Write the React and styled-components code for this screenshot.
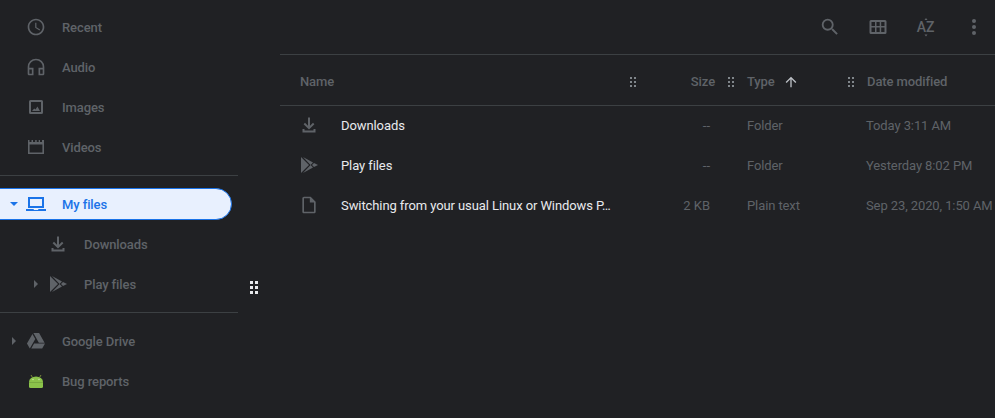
import React from "react";
import styled, { createGlobalStyle } from "styled-components";

const GlobalStyle = createGlobalStyle`
  html, body {
    margin: 0;
    height: 100%;
    background: #202124;
    overflow: hidden;
  }
  #root {
    height: 100%;
  }
`;

const Page = styled.div`
  position: relative;
  display: flex;
  height: 418px;
  font-family: Roboto, "Liberation Sans", sans-serif;
  font-size: 13px;
  letter-spacing: -0.1px;
  color: #5f6368;
  background: #202124;
`;

const Sidebar = styled.nav`
  position: relative;
  flex: 0 0 280px;
  padding-top: 7px;
  box-sizing: border-box;
`;

const Divider = styled.div`
  width: 238px;
  height: 1px;
  margin: 8px 0;
  background: #3c4043;
`;

const Item = styled.div`
  display: flex;
  align-items: center;
  height: 40px;
  padding-left: ${(p) => (p.$nested ? "22px" : "0")};
  font-weight: 500;
  color: #5f6368;
`;

const ActiveItem = styled(Item)`
  position: relative;
  color: #1a73e8;
  z-index: 0;

  &::before {
    content: "";
    position: absolute;
    z-index: -1;
    left: -1px;
    top: 4px;
    width: 233px;
    height: 32px;
    box-sizing: border-box;
    background: #e8f0fe;
    border: 1px solid #1a73e8;
    border-radius: 0 16px 16px 0;
  }
`;

const Expander = styled.span`
  flex: 0 0 26px;
  display: flex;
  justify-content: center;
  padding-left: 2px;
  box-sizing: border-box;
`;

const ItemLabel = styled.span`
  margin-left: 16px;
`;

const Triangle = styled.span`
  width: 0;
  height: 0;
  ${(p) =>
    p.$open
      ? `border-left: 4px solid transparent;
         border-right: 4px solid transparent;
         border-top: 4px solid #1a73e8;`
      : `border-top: 4px solid transparent;
         border-bottom: 4px solid transparent;
         border-left: 4px solid #5f6368;`}
`;

const Svg = styled.svg`
  flex: none;
  display: block;
  color: ${(p) => p.$color || "#5f6368"};
  fill: currentColor;
`;

const SplitterGrip = styled.div`
  position: absolute;
  left: 250px;
  top: 281px;
`;

const Main = styled.main`
  flex: 1;
  min-width: 0;
`;

const Toolbar = styled.header`
  display: flex;
  justify-content: flex-end;
  align-items: center;
  gap: 24px;
  height: 54px;
  padding-right: 9px;
  border-bottom: 1px solid #3c4043;
`;

const ToolIcon = styled.span`
  display: flex;
  width: 24px;
  height: 24px;
  align-items: center;
  justify-content: center;
`;

const TableHead = styled.div`
  display: grid;
  grid-template-columns: 326px 14px 75px 32px 97px 14px 1fr;
  align-items: center;
  height: 50px;
  box-sizing: content-box;
  padding-left: 20px;
  border-bottom: 1px solid #3c4043;
  font-weight: 500;
`;

const HeadCell = styled.div`
  display: flex;
  align-items: center;
  justify-content: ${(p) => (p.$end ? "flex-end" : "flex-start")};
  gap: 8px;
  padding-top: 3px;
  padding-left: ${(p) => p.$inset || "0"};
`;

const GripCell = styled.div`
  display: flex;
  justify-content: center;
  padding-top: 3px;
`;

const Row = styled.div`
  display: grid;
  grid-template-columns: 332px 98px 14px 137px 1fr;
  align-items: center;
  height: 40px;
  padding-bottom: 2px;
  box-sizing: border-box;
  white-space: nowrap;
`;

const NameCell = styled.div`
  display: flex;
  align-items: center;
  gap: 22px;
  padding-left: 19px;
`;

const FileName = styled.span`
  color: #e8eaed;
  letter-spacing: -0.09px;
`;

const SizeCell = styled.div`
  grid-column: 2;
  text-align: right;
  letter-spacing: 0;
`;

const TypeCell = styled.div`
  grid-column: 4;
  padding-left: 23px;
`;

const DateCell = styled.div`
  padding-left: 5px;
`;

const Icon = ({ size = 20, box = 24, color, children }) => (
  <Svg width={size} height={size} viewBox={`0 0 ${box} ${box}`} $color={color}>
    {children}
  </Svg>
);

const ClockIcon = () => (
  <Icon>
    <path d="M11.99 2C6.47 2 2 6.48 2 12s4.47 10 9.99 10C17.52 22 22 17.52 22 12S17.52 2 11.99 2zM12 20c-4.42 0-8-3.58-8-8s3.58-8 8-8 8 3.58 8 8-3.58 8-8 8zm.5-13H11v6l5.25 3.15.75-1.23-4.5-2.67z" />
  </Icon>
);

const HeadsetIcon = () => (
  <Icon>
    <path d="M12 2a10 10 0 0 0-10 10v8c0 1.1.9 2 2 2h5v-9H4v-1c0-4.42 3.58-8 8-8s8 3.58 8 8v1h-5v9h5c1.1 0 2-.9 2-2v-8A10 10 0 0 0 12 2zM7 15v5H4v-5h3zm13 5h-3v-5h3v5z" />
  </Icon>
);

const ImageIcon = () => (
  <Icon box={20}>
    <path d="M4.5 3h11A1.5 1.5 0 0 1 17 4.500v11a1.500 1.500 0 0 1-1.500 1.500h-11A1.500 1.500 0 0 1 3 15.500v-11A1.500 1.500 0 0 1 4.500 3zM5 5v10h10V5H5z" fillRule="evenodd" />
    <path d="M6 14l2.200-2.600 1.300 1 1.900-2.900L14 14z" />
  </Icon>
);

const MovieIcon = () => (
  <Icon box={20}>
    <path
      d="M2 3h1.500v2h2V3h1.500v2h2.200V3h1.500v2h2V3H14v2h2V3h2v14H2V3zm1.600 4.500v8h12.800v-8H3.600z"
      fillRule="evenodd"
    />
  </Icon>
);

const LaptopIcon = () => (
  <Icon box={20} color="#1a73e8">
    <path d="M2 3h16v11H2V3zm2 2v7h12V5H4z" fillRule="evenodd" />
    <path d="M0 15h7.500l.5 1h4l.5-1H20v2H0z" />
  </Icon>
);

const DownloadIcon = () => (
  <Icon box={20}>
    <path d="M9 2.500h2v8.300l3-3 1.400 1.400L10 14.600 4.600 9.200 6 7.800l3 3V2.500zM3.500 14h2v1.500h9V14h2v3.500h-13V14z" />
  </Icon>
);

const PlayIcon = () => (
  <Icon box={20}>
    <path d="M2 2v16l8-8z" />
    <path d="M4 2l10 5.600-2.400 2.400zM4 18l10-5.600-2.400-2.400z" />
    <path d="M15 8l4 2-4 2-2-2z" />
  </Icon>
);

const FileIcon = () => (
  <Icon>
    <path d="M14 2H6c-1.100 0-2 .9-2 2v16c0 1.100.9 2 2 2h12c1.100 0 2-.9 2-2V8l-6-6zM6 20V4h7v5h5v11H6z" />
  </Icon>
);

const DriveIcon = () => (
  <Icon>
    <path d="M7.710 3.500L1.150 15l3.430 6 6.550-11.500L7.710 3.500zM9.730 15L6.300 21h13.120l3.430-6H9.730zM22.280 14l-6.560-11.500H8.870L15.430 14h6.850z" />
  </Icon>
);

const AndroidIcon = () => (
  <Icon box={20}>
    <path d="M6.500 6.500L5 4M13.500 6.500L15 4" stroke="#7a8b3a" strokeWidth="1" fill="none" />
    <path
      d="M3 11a7 5.500 0 0 1 14 0v4.500a1.500 1.500 0 0 1-1.500 1.500h-11A1.500 1.500 0 0 1 3 15.500z"
      fill="#8bc34a"
    />
    <rect x="3" y="11" width="14" height="0.600" fill="#6d9a3a" />
    <circle cx="7" cy="8.500" r="0.800" fill="#c5e1a5" />
    <circle cx="13" cy="8.500" r="0.800" fill="#c5e1a5" />
  </Icon>
);

const SearchIcon = () => (
  <Icon size={22}>
    <path d="M15.500 14h-.79l-.28-.27A6.471 6.471 0 0 0 16 9.500 6.500 6.500 0 1 0 9.500 16c1.610 0 3.090-.59 4.230-1.570l.27.28v.79l5 4.990L20.490 19l-4.990-5zm-6 0C7.010 14 5 11.990 5 9.500S7.010 5 9.500 5 14 7.010 14 9.500 11.990 14 9.500 14z" />
  </Icon>
);

const GridIcon = () => (
  <Icon size={20} box={20}>
    <path
      d="M3 3h14A1.500 1.500 0 0 1 18.500 4.500v11A1.500 1.500 0 0 1 17 17H3A1.500 1.500 0 0 1 1.500 15.500v-11A1.500 1.500 0 0 1 3 3zM3.500 5v4h3.500V5H3.500zm5 0v4h3.200V5H8.500zm4.700 0v4h3.300V5h-3.300zM3.500 10.500V15h3.500v-4.500H3.500zm5 0V15h3.200v-4.500H8.500zm4.700 0V15h3.300v-4.500h-3.300z"
      fillRule="evenodd"
    />
  </Icon>
);

const SortIcon = () => (
  <Icon size={24} box={24}>
    <path d="M12 3l1.500 2h-3zM12 21.500l1.500-2h-3z" />
    <text x="2.800" y="17" fontFamily="Roboto, sans-serif" fontWeight="500" fontSize="14">
      A
    </text>
    <text x="12" y="17" fontFamily="Roboto, sans-serif" fontWeight="500" fontSize="14">
      Z
    </text>
  </Icon>
);

const MoreIcon = () => (
  <Icon size={24} box={24}>
    <circle cx="12" cy="6" r="2" />
    <circle cx="12" cy="12" r="2" />
    <circle cx="12" cy="18" r="2" />
  </Icon>
);

const ArrowUp = () => (
  <Icon size={16} color="#bdc1c6">
    <path d="M4 12l1.410 1.410L11 7.830V20h2V7.830l5.580 5.590L20 12l-8-8-8 8z" />
  </Icon>
);

const Grip = ({ size = 2, step = 4, color = "#80868b" }) => (
  <Svg width={step + size} height={step * 2 + size} $color={color}>
    {[0, 1, 2].map((r) =>
      [0, 1].map((c) => (
        <rect key={`${r}-${c}`} x={c * step} y={r * step} width={size} height={size} />
      ))
    )}
  </Svg>
);

const rows = [
  { name: "Downloads", icon: <DownloadIcon />, size: "--", type: "Folder", date: "Today 3:11 AM" },
  { name: "Play files", icon: <PlayIcon />, size: "--", type: "Folder", date: "Yesterday 8:02 PM" },
  {
    name: "Switching from your usual Linux or Windows P…",
    icon: <FileIcon />,
    size: "2 KB",
    type: "Plain text",
    date: "Sep 23, 2020, 1:50 AM",
  },
];

const NavItem = ({ icon, label, nested, arrow }) => (
  <Item $nested={nested}>
    <Expander>{arrow && <Triangle />}</Expander>
    {icon}
    <ItemLabel>{label}</ItemLabel>
  </Item>
);

const App = () => {
  return (
    <Page>
      <GlobalStyle />
      <Sidebar>
        <NavItem icon={<ClockIcon />} label="Recent" />
        <NavItem icon={<HeadsetIcon />} label="Audio" />
        <NavItem icon={<ImageIcon />} label="Images" />
        <NavItem icon={<MovieIcon />} label="Videos" />
        <Divider />
        <ActiveItem>
          <Expander>
            <Triangle $open />
          </Expander>
          <LaptopIcon />
          <ItemLabel>My files</ItemLabel>
        </ActiveItem>
        <NavItem nested icon={<DownloadIcon />} label="Downloads" />
        <NavItem nested arrow icon={<PlayIcon />} label="Play files" />
        <Divider />
        <NavItem arrow icon={<DriveIcon />} label="Google Drive" />
        <NavItem icon={<AndroidIcon />} label="Bug reports" />
        <SplitterGrip>
          <Grip size={3} step={5} color="#e8eaed" />
        </SplitterGrip>
      </Sidebar>
      <Main>
        <Toolbar>
          <ToolIcon>
            <SearchIcon />
          </ToolIcon>
          <ToolIcon>
            <GridIcon />
          </ToolIcon>
          <ToolIcon>
            <SortIcon />
          </ToolIcon>
          <ToolIcon>
            <MoreIcon />
          </ToolIcon>
        </Toolbar>
        <TableHead>
          <HeadCell>Name</HeadCell>
          <GripCell>
            <Grip />
          </GripCell>
          <HeadCell $end>Size</HeadCell>
          <GripCell>
            <Grip />
          </GripCell>
          <HeadCell>
            Type <ArrowUp />
          </HeadCell>
          <GripCell>
            <Grip />
          </GripCell>
          <HeadCell $inset="9px">Date modified</HeadCell>
        </TableHead>
        {rows.map((row) => (
          <Row key={row.name}>
            <NameCell>
              {row.icon}
              <FileName>{row.name}</FileName>
            </NameCell>
            <SizeCell>{row.size}</SizeCell>
            <TypeCell>{row.type}</TypeCell>
            <DateCell>{row.date}</DateCell>
          </Row>
        ))}
      </Main>
    </Page>
  );
};

export default App;
